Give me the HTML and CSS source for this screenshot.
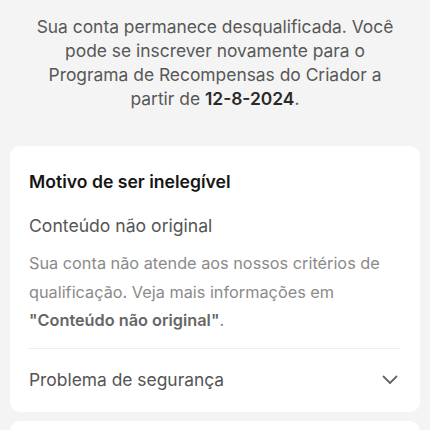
FILE: index.html
```html
<!DOCTYPE html>
<html lang="pt">
<head>
<meta charset="utf-8">
<link rel="stylesheet" href="styles.css">
</head>
<body>
<main class="page">
  <p class="notice">Sua conta permanece desqualificada. Você pode se inscrever novamente para o Programa de Recompensas do Criador a partir de <strong>12-8-2024</strong>.</p>
  <section class="card">
    <h2 class="card-title">Motivo de ser inelegível</h2>
    <div class="reason">
      <h3 class="reason-name">Conteúdo não original</h3>
      <p class="reason-desc">Sua conta não atende aos nossos critérios de qualificação. Veja mais informações em <strong>"Conteúdo não original"</strong>.</p>
    </div>
    <div class="row">
      <span class="row-label">Problema de segurança</span>
      <svg class="chev" width="16" height="10" viewBox="0 0 16 10"><path d="M1.5 1.5 L8 8 L14.5 1.5" fill="none" stroke="#666" stroke-width="1.8" stroke-linecap="round" stroke-linejoin="round"/></svg>
    </div>
  </section>
  <section class="card card-next"></section>
</main>
</body>
</html>
```
FILE: styles.css
```css
html, body {
  margin: 0;
  padding: 0;
  background: #f4f4f4;
}
body {
  font-family: Inter, "Noto Sans", sans-serif;
  -webkit-font-smoothing: antialiased;
}
.page {
  display: flex;
  flex-direction: column;
  padding: 15px 10px 0;
}
.notice {
  margin: 0 auto;
  max-width: 372px;
  text-align: center;
  font-size: 17.4px;
  line-height: 24px;
  color: #585858;
}
.notice strong {
  color: #2a2a2a;
  font-weight: 600;
}
.card {
  background: #fff;
  border-radius: 10px;
  padding: 24px 20px 0 19px;
  margin-top: 35px;
}
.card-title {
  margin: 0;
  font-size: 17.6px;
  line-height: 24px;
  font-weight: 600;
  color: #161616;
}
.reason {
  padding: 20px 0 13px;
  border-bottom: 1px solid #efefef;
}
.reason-name {
  margin: 0;
  font-size: 17.6px;
  line-height: 24px;
  font-weight: 400;
  color: #555;
}
.reason-desc {
  margin: 11px 0 0;
  font-size: 16.3px;
  line-height: 28.5px;
  color: #8a8a8a;
}
.reason-desc strong {
  color: #666;
  font-weight: 600;
}
.row {
  height: 63px;
  display: flex;
  align-items: center;
  justify-content: space-between;
}
.row-label {
  font-size: 17.4px;
  line-height: 24px;
  color: #555;
}
.chev {
  margin-right: 2px;
}
.card-next {
  margin-top: 9px;
  height: 40px;
  padding: 0;
}
```
